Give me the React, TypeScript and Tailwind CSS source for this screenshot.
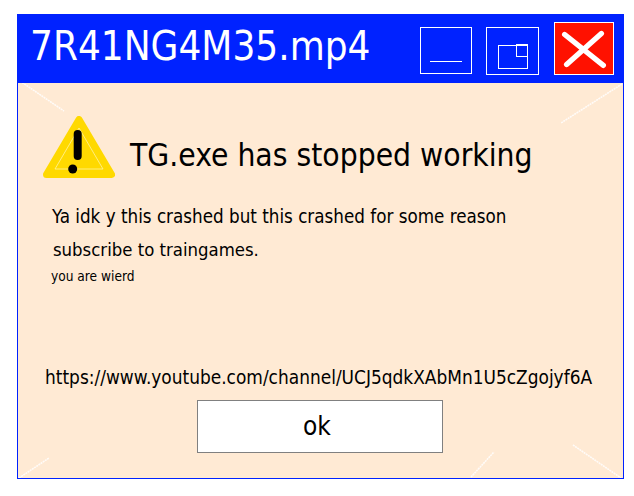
const font = "font-['DejaVu_Sans_Condensed','DejaVu_Sans',sans-serif]";

function WarningIcon() {
  return (
    <svg viewBox="0 0 72 62" className="h-[62px] w-[72px] shrink-0">
      <path d="M36 3.5 L68.5 58.5 H3.5 Z" fill="#ffd900" stroke="#ffd900" strokeWidth="7" strokeLinejoin="round" />
      <path d="M36 12 L60 53 H12 Z" fill="none" stroke="#fff3a0" strokeWidth="0.8" />
      <path d="M34.7 18 V40" stroke="#000" strokeWidth="8" strokeLinecap="round" />
      <circle cx="29.7" cy="53" r="4.5" fill="#000" />
    </svg>
  );
}

function CornerLines() {
  return (
    <svg viewBox="0 0 605 395" className="pointer-events-none absolute left-0 top-0 h-[395px] w-[605px]">
      <g stroke="#fff" strokeWidth="1.6" strokeDasharray="2 0.6" opacity="0.85">
        <line x1="2" y1="-2" x2="46" y2="28" />
        <line x1="604" y1="1" x2="543" y2="40" />
        <line x1="1" y1="395" x2="31" y2="375" />
        <line x1="555" y1="362" x2="603" y2="395" />
        <line x1="453" y1="394" x2="476" y2="369" />
      </g>
    </svg>
  );
}

export default function App() {
  return (
    <div className={`min-h-[496px] bg-white pl-[17px] pt-[14px] ${font}`}>
      <div className="flex h-[465px] w-[607px] flex-col border-b-[1.5px] border-l-[1.5px] border-r-[1.5px] border-[#0022ff] bg-[#ffead4]">
        <div className="flex h-[69px] shrink-0 items-start bg-[#0022ff]">
          <span className="ml-[12px] mt-[5px] whitespace-nowrap text-[40px] leading-[54px] text-white">7R41NG4M35.mp4</span>
          <div className="ml-auto mr-[9px] mt-[8px] flex items-start">
            <button className="mt-[5px] flex h-[47px] w-[52px] items-end justify-center border border-white pb-[11px]">
              <span className="h-px w-[32px] bg-white" />
            </button>
            <button className="relative ml-[14px] mt-[5px] h-[48px] w-[53px] border border-white">
              <span className="absolute left-[11px] top-[17px] h-[24px] w-[30px] border border-white" />
              <span className="absolute left-[29px] top-[16px] h-[13px] w-[12px] border border-white border-t-2" />
            </button>
            <button className="ml-[15px] flex h-[53px] w-[60px] items-center justify-center border border-white bg-[#ff1100]">
              <svg viewBox="0 0 60 53" className="h-[53px] w-[60px]">
                <path d="M10 12 L50 44 M48 11 L12 43" stroke="#fff" strokeWidth="5.5" strokeLinecap="round" />
              </svg>
            </button>
          </div>
        </div>
        <div className="relative flex-1">
          <CornerLines />
          <div className="ml-[25px] mt-[33px] flex items-start">
            <WarningIcon />
            <h1 className="ml-[15px] mt-[17px] whitespace-nowrap text-[31.5px] leading-[44px] text-black">TG.exe has stopped working</h1>
          </div>
          <p className="ml-[34px] mt-[27px] whitespace-nowrap text-[18.67px] leading-[24px] text-black">Ya idk y this crashed but this crashed for some reason</p>
          <p className="ml-[35px] mt-[9px] whitespace-nowrap text-[18.4px] leading-[24px] text-black">subscribe to traingames.</p>
          <p className="ml-[33px] mt-[5px] whitespace-nowrap text-[13.6px] leading-[18px] text-black">you are wierd</p>
          <p className="ml-[27px] mt-[80px] whitespace-nowrap text-[18.9px] leading-[24px] text-black">https://www.youtube.com/channel/UCJ5qdkXAbMn1U5cZgojyf6A</p>
          <button className="ml-[179px] mt-[11px] block h-[53px] w-[246px] border border-[#808080] bg-white pr-[6px] text-[26px] text-black">ok</button>
        </div>
      </div>
    </div>
  );
}
